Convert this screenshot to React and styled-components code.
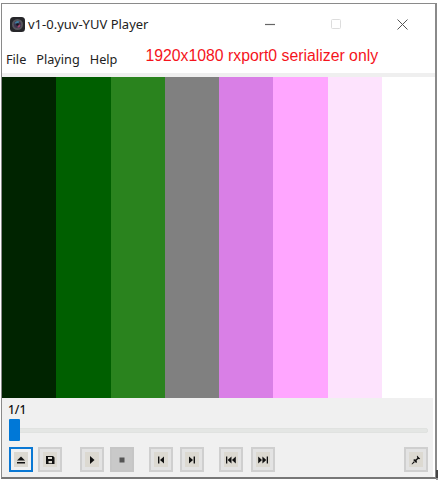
import React from "react";
import styled, { createGlobalStyle } from "styled-components";

const Global = createGlobalStyle`
  html, body { margin: 0; padding: 0; background: #fff; }
  #root { width: 440px; height: 480px; overflow: hidden; }
`;

const Page = styled.div`
  width: 440px;
  height: 480px;
  box-sizing: border-box;
  padding: 3px 3px 1px 1px;
  background: #fff;
  position: relative;
`;

const Window = styled.div`
  height: 100%;
  box-sizing: border-box;
  border: 1px solid #8a8a8a;
  border-right-width: 2px;
  border-bottom-width: 2px;
  border-bottom-color: #777;
  display: flex;
  flex-direction: column;
  background: #fff;
`;

const TitleBar = styled.div`
  height: 40px;
  display: flex;
  align-items: center;
  padding: 0 0 0 8px;
  flex: none;
`;

const Title = styled.span`
  font: 13px/20px "Noto Sans", "Open Sans", sans-serif;
  color: #222;
  margin-left: 3px;
  flex: 1;
`;

const Caption = styled.div`
  width: 66px;
  height: 30px;
  display: flex;
  align-items: center;
  justify-content: center;
  flex: none;
`;

const MenuBar = styled.div`
  height: 29px;
  display: flex;
  align-items: center;
  padding-left: 4px;
  border-bottom: 4px solid #efefef;
  flex: none;
`;

const MenuItem = styled.span`
  font: 12.7px/20px "Noto Sans", "Open Sans", sans-serif;
  color: #222;
  margin-right: 10px;
`;

const Note = styled.span`
  font: 15.8px/20px "Liberation Sans", Arial, sans-serif;
  color: #f5141c;
  margin-left: 18px;
  position: relative;
  top: -3px;
`;

const Picture = styled.div`
  height: 321px;
  display: grid;
  grid-template-columns: repeat(7, 54.3px) 1fr;
  flex: none;
`;

const Bar = styled.div`
  background: ${(p) => p.$color};
`;

const Panel = styled.div`
  flex: 1;
  min-height: 0;
  background: #f0f0f0;
  padding: 5px 5px 0 7px;
  margin-right: 2px;
`;

const Counter = styled.div`
  font: 500 12px/14px "Noto Sans", "Open Sans", sans-serif;
  color: #111;
  margin-left: -1px;
`;

const Slider = styled.div`
  height: 22px;
  margin-top: 2px;
  display: flex;
  align-items: center;
  position: relative;
`;

const Track = styled.div`
  flex: 1;
  height: 3px;
  background: #e4e6e4;
  border: 1px solid #e0e2e0;
  border-radius: 2px;
`;

const Thumb = styled.div`
  position: absolute;
  left: 0;
  top: 0;
  width: 11px;
  height: 22px;
  background: #0078d7;
  border-radius: 1px;
`;

const Controls = styled.div`
  display: flex;
  align-items: center;
  margin-top: 6px;
`;

const Btn = styled.div`
  width: 24px;
  height: 25px;
  box-sizing: border-box;
  flex: none;
  margin-left: ${(p) => p.$gap || 0}px;
  border: 2px solid ${(p) => (p.$focus ? "#0a78d4" : p.$off ? "#c6c6c6" : "#cfcfcf")};
  background: ${(p) => (p.$focus ? "#f1f1f1" : p.$off ? "#c9c9c9" : "#e3e3e3")};
  display: flex;
  align-items: center;
  justify-content: center;
`;

const Face = styled.div`
  width: 14px;
  height: 15px;
  background: ${(p) => (p.$off ? "#c9c9c9" : "#dcd9d1")};
  display: flex;
  align-items: center;
  justify-content: center;
`;

const CornerMark = styled.div`
  position: absolute;
  left: 436px;
  top: 470px;
  width: 2px;
  height: 8px;
  background: #444;
  border-bottom: 2px solid #999;
`;

const Icon = ({ children, color = "#111" }) => (
  <svg width="12" height="12" viewBox="0 0 12 12" fill={color}>{children}</svg>
);

const Logo = () => (
  <svg width="15" height="15" viewBox="0 0 15 15">
    <rect x="0" y="0" width="15" height="15" rx="3.5" fill="#26262a" />
    <circle cx="7.5" cy="7.5" r="5.5" fill="#55555c" />
    <circle cx="7.5" cy="7.5" r="3.6" fill="#3d3350" />
    <path d="M4.5 6.5a3.3 3.3 0 0 1 5-2l-1.5 2z" fill="#3f7f9f" />
    <path d="M7.5 10.8a3.3 3.3 0 0 0 3-3H8z" fill="#a2486a" />
    <circle cx="7.5" cy="7.5" r="1.3" fill="#15151a" />
  </svg>
);

const bars = ["#002400", "#005f00", "#2a831e", "#808080", "#d97fe6", "#ffa6ff", "#fde3fd", "#ffffff"];

export default function App() {
  return (
    <Page>
      <Global />
      <Window>
        <TitleBar>
          <Logo />
          <Title>v1-0.yuv-YUV Player</Title>
          <Caption>
            <svg width="12" height="12" viewBox="0 0 12 12">
              <path d="M1 6.5h10" stroke="#666" strokeWidth="1.2" />
            </svg>
          </Caption>
          <Caption>
            <svg width="12" height="12" viewBox="0 0 12 12">
              <rect x="1.5" y="1.5" width="9" height="9" rx="1" fill="none" stroke="#ddd" />
            </svg>
          </Caption>
          <Caption>
            <svg width="13" height="13" viewBox="0 0 13 13">
              <path d="M1.5 1.5l10 10M11.5 1.5l-10 10" stroke="#555" strokeWidth="1" />
            </svg>
          </Caption>
        </TitleBar>
        <MenuBar>
          <MenuItem>File</MenuItem>
          <MenuItem>Playing</MenuItem>
          <MenuItem>Help</MenuItem>
          <Note>1920x1080 rxport0 serializer only</Note>
        </MenuBar>
        <Picture>
          {bars.map((c) => (
            <Bar key={c} $color={c} />
          ))}
        </Picture>
        <Panel>
          <Counter>1/1</Counter>
          <Slider>
            <Track />
            <Thumb />
          </Slider>
          <Controls>
            <Btn $focus>
              <Face>
                <Icon><path d="M6 2.5L10 6.5H2zM2 8h8v1.5H2z" /></Icon>
              </Face>
            </Btn>
            <Btn $gap={5}>
              <Face>
                <Icon><path fillRule="evenodd" d="M2 2h7l1.5 1.5V10H2zM4 3v2h4V3zM4.5 7v2.2h3.5V7z" /></Icon>
              </Face>
            </Btn>
            <Btn $gap={18}>
              <Face>
                <Icon><path d="M4 2l4.5 4L4 10z" /></Icon>
              </Face>
            </Btn>
            <Btn $gap={6} $off>
              <Face $off>
                <Icon color="#555"><rect x="3.5" y="3.5" width="5" height="5" /></Icon>
              </Face>
            </Btn>
            <Btn $gap={15}>
              <Face>
                <Icon><path d="M3 2.5h1.4v7H3zM9 2.5v7L5 6z" /></Icon>
              </Face>
            </Btn>
            <Btn $gap={7}>
              <Face>
                <Icon><path d="M3 2.5l4 3.5-4 3.5zM7.6 2.5H9v7H7.6z" /></Icon>
              </Face>
            </Btn>
            <Btn $gap={15}>
              <Face>
                <Icon><path d="M1 2.5h1.3v7H1zM6.5 2.5v7L2.6 6zM10.8 2.5v7L6.9 6z" /></Icon>
              </Face>
            </Btn>
            <Btn $gap={8}>
              <Face>
                <Icon><path d="M1.2 2.5L5 6 1.2 9.5zM5.4 2.5L9.3 6 5.4 9.5zM9.7 2.5H11v7H9.7z" /></Icon>
              </Face>
            </Btn>
            <Btn $gap={129}>
              <Face>
                <Icon><path d="M7 1.5l3.2 3.2-1 .6-1-.4L6.6 6.6l.4 1.6-.9.8L3.2 6l.9-.8 1.5.4 1.7-1.7-.4-1.2zM3.8 7.2l1 1L2 10.4l-.4-.4z" /></Icon>
              </Face>
            </Btn>
          </Controls>
        </Panel>
      </Window>
      <CornerMark />
    </Page>
  );
}
